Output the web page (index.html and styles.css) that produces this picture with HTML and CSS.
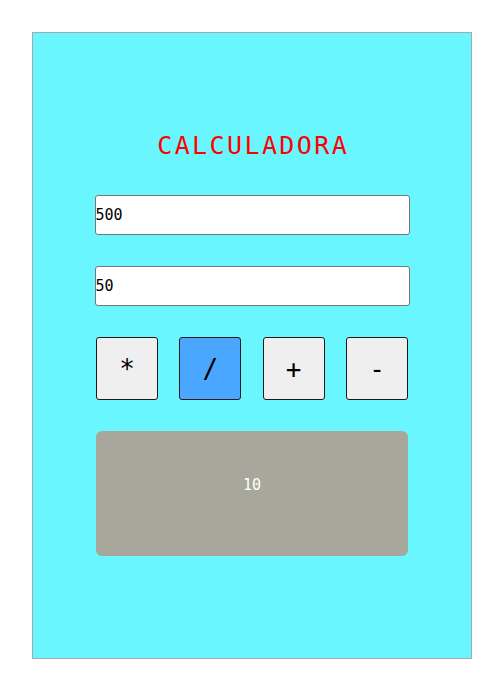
FILE: index.html
```html
<!DOCTYPE html>
<html lang="es">
<head>
<meta charset="utf-8">
<title>Calculadora</title>
<link rel="stylesheet" href="styles.css">
</head>
<body>
<div class="calc">
  <h1 class="title">CALCULADORA</h1>
  <input class="field field-a" type="text" value="500">
  <input class="field field-b" type="text" value="50">
  <div class="ops">
    <button class="op">*</button>
    <button class="op op-active">/</button>
    <button class="op">+</button>
    <button class="op">-</button>
  </div>
  <div class="result">10</div>
</div>
</body>
</html>
```
FILE: styles.css
```css
html, body {
  margin: 0;
  padding: 0;
  background: #ffffff;
}
body {
  font-family: "DejaVu Sans Mono", monospace;
}
.calc {
  box-sizing: border-box;
  margin: 32px 0 0 32px;
  width: 440px;
  height: 627px;
  border: 1px solid #a9a9a9;
  background: #69f6ff;
  display: flex;
  flex-direction: column;
  align-items: center;
}
.title {
  margin: 96px 0 0 0;
  font-size: 25px;
  letter-spacing: 2.4px;
  padding-left: 2.4px;
  line-height: 33px;
  font-weight: normal;
  color: #ff0000;
}
.field {
  box-sizing: border-box;
  width: 315px;
  height: 40px;
  margin: 0;
  padding: 0;
  border: 1px solid #767676;
  border-radius: 3px;
  background: #ffffff;
  font-family: "DejaVu Sans Mono", monospace;
  font-size: 15px;
  color: #000000;
}
.field-a { margin-top: 33px; }
.field-b { margin-top: 31px; }
.ops {
  margin-top: 31px;
  width: 312px;
  display: flex;
  justify-content: space-between;
}
.op {
  box-sizing: border-box;
  width: 62px;
  height: 63px;
  padding: 0;
  border: 1px solid #1a1a1a;
  border-radius: 3px;
  background: #efefef;
  font-family: "DejaVu Sans Mono", monospace;
  font-size: 26px;
  color: #000000;
}
.op-active {
  background: #4aa6ff;
}
.result {
  box-sizing: border-box;
  margin-top: 31px;
  width: 312px;
  height: 125px;
  padding-bottom: 17px;
  border-radius: 6px;
  background: #a7a79b;
  color: #ffffff;
  font-size: 15px;
  display: flex;
  align-items: center;
  justify-content: center;
}
```
